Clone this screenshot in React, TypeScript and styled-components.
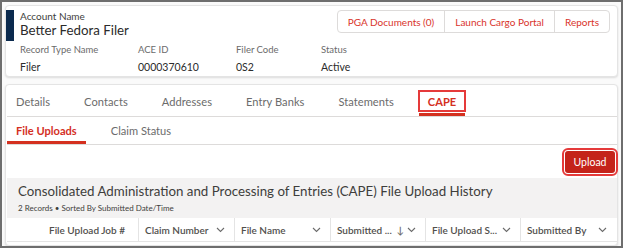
import { createGlobalStyle, styled } from "styled-components";

const GlobalStyle = createGlobalStyle`
  html, body {
    margin: 0;
    padding: 0;
    background: #ffffff;
    font-family: Lato, "Open Sans", sans-serif;
  }
  * {
    box-sizing: border-box;
  }
`;

const fields = [
  { label: "Record Type Name", value: "Filer" },
  { label: "ACE ID", value: "0000370610" },
  { label: "Filer Code", value: "0S2" },
  { label: "Status", value: "Active" },
];

const actions = ["PGA Documents (0)", "Launch Cargo Portal", "Reports"];

const tabs = ["Details", "Contacts", "Addresses", "Entry Banks", "Statements", "CAPE"];

const columns = [
  { title: "File Upload Job #", width: 131, sortable: false },
  { title: "Claim Number", width: 96, sortable: true },
  { title: "File Name", width: 96, sortable: true },
  { title: "Submitted ...", width: 95, sortable: true, sorted: true },
  { title: "File Upload S...", width: 95, sortable: true },
  { title: "Submitted By", width: 96, sortable: true },
];

const Chevron = () => (
  <svg width="9" height="6" viewBox="0 0 9 6" fill="none">
    <path d="M1 1l3.5 3.5L8 1" stroke="#6b6b6b" strokeWidth="1.1" />
  </svg>
);

export default function App() {
  return (
    <>
      <GlobalStyle />
      <Frame>
        <HeaderCard>
          <TopRow>
            <Identity>
              <Bar />
              <div>
                <SmallLabel>Account Name</SmallLabel>
                <RecordName>Better Fedora Filer</RecordName>
              </div>
            </Identity>
            <ButtonGroup>
              {actions.map((a) => (
                <GroupButton key={a}>{a}</GroupButton>
              ))}
            </ButtonGroup>
          </TopRow>
          <Fields>
            {fields.map((f) => (
              <div key={f.label}>
                <FieldLabel>{f.label}</FieldLabel>
                <FieldValue>{f.value}</FieldValue>
              </div>
            ))}
          </Fields>
        </HeaderCard>

        <TabsCard>
          <TabBar>
            {tabs.map((t) => (
              <Tab key={t} $active={t === "CAPE"}>
                {t === "CAPE" ? <Marked>{t}</Marked> : t}
              </Tab>
            ))}
          </TabBar>
          <SubTabBar>
            <SubTab $active>File Uploads</SubTab>
            <SubTab>Claim Status</SubTab>
          </SubTabBar>
          <UploadRow>
            <UploadButton>Upload</UploadButton>
          </UploadRow>
          <ListHeader>
            <ListTitle>
              Consolidated Administration and Processing of Entries (CAPE) File Upload History
            </ListTitle>
            <ListMeta>2 Records • Sorted By Submitted Date/Time</ListMeta>
          </ListHeader>
          <HeadRow>
            {columns.map((c, i) => (
              <HeadCell key={c.title} $width={c.width} $first={i === 0}>
                <span>
                  {c.title}
                  {c.sorted && <SortArrow>↓</SortArrow>}
                </span>
                {c.sortable && <Chevron />}
              </HeadCell>
            ))}
          </HeadRow>
        </TabsCard>
      </Frame>
    </>
  );
}

const Frame = styled.div`
  width: 623px;
  height: 248px;
  border: 2px solid #6e6e6e;
  background: #fafafa;
  padding: 3px 3px 0 3px;
  display: flex;
  flex-direction: column;
  gap: 7px;
  overflow: hidden;
`;

const HeaderCard = styled.div`
  height: 72px;
  flex-shrink: 0;
  background: #fff;
  border: 1px solid #e4e4e4;
  border-radius: 4px;
  box-shadow: 0 1px 2px rgba(0, 0, 0, 0.12);
  padding: 4px 7px 0 0;
`;

const TopRow = styled.div`
  display: flex;
  justify-content: space-between;
  align-items: flex-start;
`;

const Identity = styled.div`
  display: flex;
  gap: 6px;
`;

const Bar = styled.div`
  width: 8px;
  height: 31px;
  background: #0b2a4e;
`;

const SmallLabel = styled.div`
  font-size: 10px;
  line-height: 12px;
  color: #3e3e3c;
`;

const RecordName = styled.div`
  font-size: 13.3px;
  line-height: 16px;
  color: #2b2b2b;
`;

const ButtonGroup = styled.div`
  display: flex;
  border: 1px solid #dddbda;
  border-radius: 4px;
  background: #fff;
  height: 23px;
`;

const GroupButton = styled.div`
  display: flex;
  align-items: center;
  padding: 0 10px;
  font-size: 10px;
  color: #d9342b;
  & + & {
    border-left: 1px solid #dddbda;
  }
`;

const Fields = styled.div`
  display: grid;
  grid-template-columns: 118px 98px 85px auto;
  margin: 2px 0 0 14px;
`;

const FieldLabel = styled.div`
  font-size: 9.5px;
  line-height: 14px;
  color: #6b6b6b;
`;

const FieldValue = styled.div`
  font-size: 10.5px;
  line-height: 16px;
  color: #2b2b2b;
  margin-top: 2px;
`;

const TabsCard = styled.div`
  flex: 1;
  background: #fff;
  border: 1px solid #e4e4e4;
  border-radius: 4px;
  box-shadow: 0 1px 2px rgba(0, 0, 0, 0.12);
`;

const TabBar = styled.div`
  display: flex;
  gap: 16px;
  margin-left: 1px;
  border-bottom: 1px solid #dddbda;
`;

const Tab = styled.div<{ $active?: boolean }>`
  height: 31px;
  padding: 4px ${(p) => (p.$active ? "0" : "9px")} 0;
  display: flex;
  align-items: center;
  font-size: 11.1px;
  letter-spacing: 0.05px;
  color: ${(p) => (p.$active ? "#d4301f" : "#6b6b6b")};
  font-weight: ${(p) => (p.$active ? 700 : 400)};
  border-bottom: 3px solid ${(p) => (p.$active ? "#d4301f" : "transparent")};
`;

const Marked = styled.span`
  display: flex;
  align-items: center;
  height: 22px;
  padding: 0 8px;
  border: 2px solid #e53a3a;
  margin: 0 -1px;
`;

const SubTabBar = styled.div`
  display: flex;
  gap: 16px;
  margin-left: 1px;
  border-bottom: 1px solid #dddbda;
`;

const SubTab = styled.div<{ $active?: boolean }>`
  height: 27px;
  padding: 3px 9px 0;
  display: flex;
  align-items: center;
  font-size: 11.1px;
  color: ${(p) => (p.$active ? "#d4301f" : "#6b6b6b")};
  font-weight: ${(p) => (p.$active ? 700 : 400)};
  border-bottom: 3px solid ${(p) => (p.$active ? "#d4301f" : "transparent")};
`;

const UploadRow = styled.div`
  display: flex;
  justify-content: flex-end;
  padding: 6px 2px 5px 0;
`;

const UploadButton = styled.div`
  width: 50px;
  height: 22px;
  display: flex;
  align-items: center;
  justify-content: center;
  background: #c4231a;
  border-radius: 3px;
  color: #fff;
  font-size: 10.5px;
  outline: 2px solid #e53a3a;
  outline-offset: 1px;
`;

const ListHeader = styled.div`
  margin-left: 1px;
  background: #f3f2f2;
  padding: 3px 11px 4px;
  height: 40px;
`;

const ListTitle = styled.div`
  font-size: 13.3px;
  line-height: 20px;
  color: #3e3e3c;
  white-space: nowrap;
`;

const ListMeta = styled.div`
  font-size: 8px;
  line-height: 12px;
  margin-top: 1px;
  color: #3e3e3c;
`;

const HeadRow = styled.div`
  display: flex;
  margin-left: 1px;
  height: 24px;
  border-bottom: 1px solid #e4e4e4;
`;

const HeadCell = styled.div<{ $width: number; $first?: boolean }>`
  width: ${(p) => p.$width}px;
  display: flex;
  align-items: center;
  justify-content: space-between;
  padding: 0 9px 0 ${(p) => (p.$first ? "42px" : "6px")};
  font-size: 10px;
  font-weight: 600;
  color: #514f4d;
  white-space: nowrap;
  border-left: ${(p) => (p.$first ? "none" : "1px solid #e4e4e4")};
`;

const SortArrow = styled.span`
  margin-left: 5px;
  color: #6b6b6b;
`;
